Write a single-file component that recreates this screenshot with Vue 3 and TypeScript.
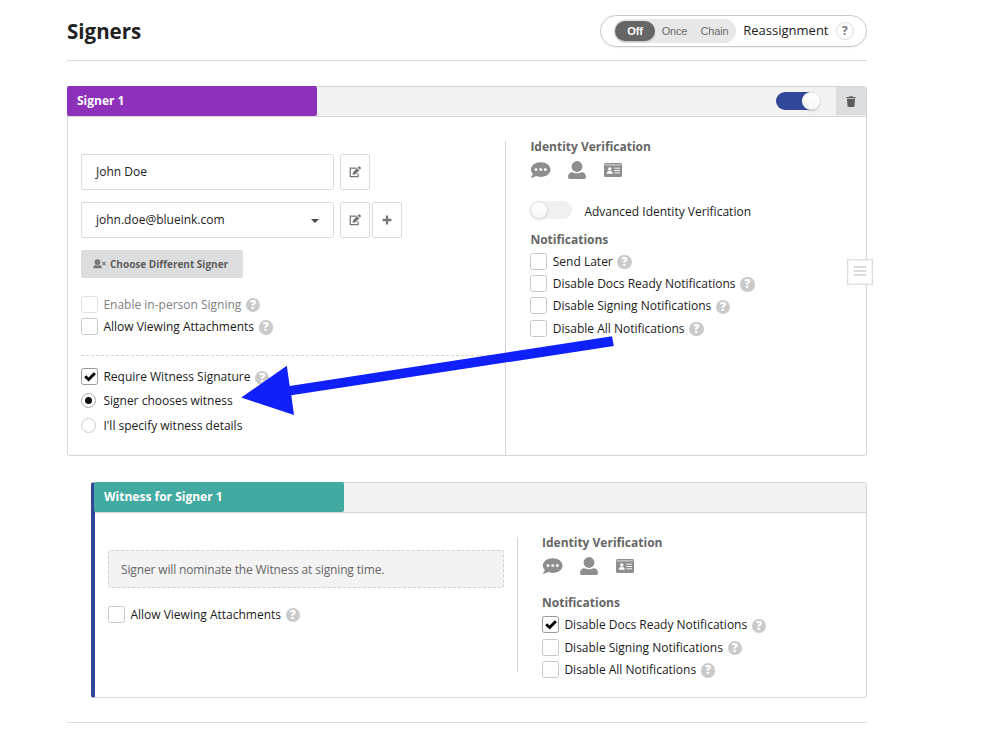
<script setup lang="ts">
import { h, type FunctionalComponent } from 'vue'

interface Option {
  label: string
  checked?: boolean
  disabled?: boolean
}

const signerOptions: Option[] = [
  { label: 'Enable in-person Signing', disabled: true },
  { label: 'Allow Viewing Attachments' },
]
const witnessRequired: Option[] = [{ label: 'Require Witness Signature', checked: true }]
const witnessModes: Option[] = [
  { label: 'Signer chooses witness', checked: true },
  { label: "I'll specify witness details" },
]
const signerNotifications: Option[] = [
  { label: 'Send Later' },
  { label: 'Disable Docs Ready Notifications' },
  { label: 'Disable Signing Notifications' },
  { label: 'Disable All Notifications' },
]
const witnessOptions: Option[] = [{ label: 'Allow Viewing Attachments' }]
const witnessNotifications: Option[] = [
  { label: 'Disable Docs Ready Notifications', checked: true },
  { label: 'Disable Signing Notifications' },
  { label: 'Disable All Notifications' },
]

const OptionList: FunctionalComponent<{ items: Option[] }> = (props) =>
  h('div', { class: 'options' }, props.items.map((o) =>
    h('div', { class: ['option', { disabled: o.disabled }] }, [
      h('span', { class: ['box', { on: o.checked }] }, o.checked
        ? [h('svg', { viewBox: '0 0 12 10', width: 12, height: 10 }, [
            h('path', { d: 'M0.2 5.2 L2.2 3.3 L4.5 5.4 L9.8 0.3 L11.9 2.2 L4.6 9.5 Z', fill: '#000' }),
          ])]
        : []),
      h('span', { class: 'label' }, o.label),
      h('span', { class: 'help' }, '?'),
    ])))
OptionList.props = ['items']

const EditIcon: FunctionalComponent = () =>
  h('svg', { viewBox: '0 0 12 12', width: 12, height: 12 }, [
    h('path', { d: 'M7.3 2.2 H1.3 V10.6 H9 V7.4', fill: 'none', stroke: '#767676', 'stroke-width': 1.3 }),
    h('path', { d: 'M3.6 8.8 L4 6.2 L8 2.1 L10.3 4.4 L6.2 8.4 Z M8.6 1.5 L9.7 0.5 Q10.3 0.1 10.8 0.6 L11.7 1.5 Q12.2 2.1 11.8 2.6 L10.8 3.8 Z', fill: '#767676' }),
  ])

const VerificationIcons: FunctionalComponent = () =>
  h('div', { class: 'verify-icons' }, [
    h('svg', { viewBox: '0 0 21 18', width: 21, height: 18 }, [
      h('path', { d: 'M10.7 1.2 C5.1 1.2 0.9 4.4 0.9 8.5 C0.9 10.3 1.7 11.8 2.9 13.1 C2.5 14.7 1.2 15.9 0.7 16.6 C2.8 16.8 4.8 16 6.1 15.1 C7.5 15.6 9 15.9 10.7 15.9 C16.2 15.9 20.5 12.6 20.5 8.5 C20.5 4.4 16.2 1.2 10.7 1.2 Z', fill: '#8e8e8e' }),
      ...[6, 10.7, 15.3].map((cx) => h('circle', { cx, cy: 8.6, r: 1.45, fill: '#fff' })),
    ]),
    h('svg', { viewBox: '0 0 18 18', width: 18, height: 18 }, [
      h('circle', { cx: 9, cy: 5.5, r: 5.4, fill: '#8e8e8e' }),
      h('path', { d: 'M0 16 C0 13 1.8 11.2 4.6 11.2 C7 12.7 11 12.7 13.4 11.2 C16.2 11.2 18 13 18 16 Q18 18 16.3 18 H1.7 Q0 18 0 16 Z', fill: '#8e8e8e' }),
    ]),
    h('svg', { viewBox: '0 0 18 14', width: 18, height: 14 }, [
      h('rect', { width: 18, height: 14, rx: 1.5, fill: '#8e8e8e' }),
      h('path', { d: 'M1 1.9 H17', stroke: '#fff', 'stroke-width': 0.7 }),
      h('path', { d: 'M10.3 5.2 H16 M10.3 7.5 H16 M10.3 9.8 H16', stroke: '#fff', 'stroke-width': 0.9 }),
      h('circle', { cx: 5.8, cy: 6, r: 1.7, fill: '#fff' }),
      h('path', { d: 'M2.8 10.7 Q2.8 8.1 4.6 7.9 Q5.8 8.6 7 7.9 Q8.8 8.1 8.8 10.7 Z', fill: '#fff' }),
    ]),
  ])
</script>

<template>
  <main class="page">
    <header class="top">
      <h1>Signers</h1>
      <div class="reassign">
        <div class="segments">
          <span class="seg off">Off</span>
          <span class="seg once">Once</span>
          <span class="seg chain">Chain</span>
        </div>
        <span class="reassign-label">Reassignment</span>
        <span class="round-help">?</span>
      </div>
    </header>

    <section class="card signer">
      <div class="bar">
        <div class="tab">Signer 1</div>
        <div class="toggle on"><i></i></div>
        <button class="trash">
          <svg viewBox="0 0 10 11" width="10" height="11">
            <path d="M0.4 0.9 H3 L3.5 0.2 H6.5 L7 0.9 H9.6 V2.2 H0.4 Z M1 3 H9 L8.5 10 Q8.4 10.9 7.5 10.9 H2.5 Q1.6 10.9 1.5 10 Z" fill="#5c5c5c" />
          </svg>
        </button>
      </div>
      <div class="body">
        <div class="left">
          <div class="fields">
            <div class="input">John Doe</div>
            <button class="square"><EditIcon /></button>
          </div>
          <div class="fields">
            <div class="input"><span class="email">john.doe@blueink.com</span><i class="caret"></i></div>
            <button class="square"><EditIcon /></button>
            <button class="square add">
              <svg viewBox="0 0 10 10" width="10" height="10"><path d="M5 0.6 V9.4 M0.6 5 H9.4" stroke="#767676" stroke-width="2.3" /></svg>
            </button>
          </div>
          <button class="choose">
            <svg viewBox="0 0 13 10" width="13" height="10">
              <circle cx="4.5" cy="3.1" r="2.9" fill="#777" />
              <path d="M0.2 8.7 Q0.2 6.2 2.6 6 Q4.5 7 6.4 6 Q8.8 6.2 8.8 8.7 Q8.8 9.3 8.1 9.3 H0.9 Q0.2 9.3 0.2 8.7 Z" fill="#777" />
              <path d="M9.3 3 L12.5 6.2 M12.5 3 L9.3 6.2" stroke="#777" stroke-width="1.1" />
            </svg>
            <span>Choose Different Signer</span>
          </button>
          <OptionList :items="signerOptions" />
          <div class="rule"></div>
          <OptionList :items="witnessRequired" />
          <div v-for="m in witnessModes" :key="m.label" class="mode">
            <span class="radio" :class="{ on: m.checked }"></span>
            <span class="label">{{ m.label }}</span>
          </div>
        </div>
        <div class="right">
          <h2>Identity Verification</h2>
          <VerificationIcons />
          <div class="advanced">
            <div class="toggle"><i></i></div>
            <span class="label">Advanced Identity Verification</span>
          </div>
          <h2>Notifications</h2>
          <OptionList :items="signerNotifications" />
        </div>
      </div>
    </section>

    <section class="card witness">
      <div class="bar">
        <div class="tab">Witness for Signer 1</div>
      </div>
      <div class="body">
        <div class="left">
          <div class="notice">Signer will nominate the Witness at signing time.</div>
          <OptionList :items="witnessOptions" />
        </div>
        <div class="right">
          <h2>Identity Verification</h2>
          <VerificationIcons />
          <h2>Notifications</h2>
          <OptionList :items="witnessNotifications" />
        </div>
      </div>
    </section>

    <div class="drag-handle"><i></i><i></i><i></i></div>
    <svg class="arrow" viewBox="0 0 1000 736" width="1000" height="736">
      <polygon points="241.3,397.6 286.8,365.8 289.7,386 612,336.3 613.8,346 291.3,395.2 294,415" fill="#1020fb" />
    </svg>
  </main>
</template>

<style>
body {
  background: #fff;
  overflow: hidden;
}
.page {
  position: relative;
  box-sizing: border-box;
  width: 1000px;
  height: 736px;
  padding: 0 133px 0 67px;
  overflow: hidden;
  font: 12px/18px "Open Sans", "Noto Sans", sans-serif;
  color: #1b1b1b;
}
.page *, .page *::before, .page *::after { box-sizing: border-box; }
.page button { font: inherit; padding: 0; margin: 0; border: 0; }
.page svg { display: block; flex: none; }
.options { display: flex; flex-direction: column; }
.option { display: flex; align-items: center; height: 22.3px; white-space: nowrap; }
.option .label { padding-top: 1px; }
.box {
  flex: none;
  width: 17px;
  height: 17px;
  border: 1px solid #c8c8c8;
  border-radius: 2.5px;
  background: #fff;
  display: flex;
  align-items: center;
  justify-content: center;
  margin-right: 5.4px;
}
.box.on { border-color: #999; }
.option.disabled .box { border-color: #e2e2e2; }
.option.disabled .label { color: #818181; }
.help {
  flex: none;
  width: 14.4px;
  height: 14.4px;
  margin: 2px 0 0 4.6px;
  border-radius: 50%;
  background: #cacaca;
  color: #fff;
  font: 800 12px/14.4px "Open Sans", sans-serif;
  text-align: center;
}
.verify-icons { display: flex; align-items: center; }
.verify-icons svg:nth-child(2) { margin-left: 17px; }
.verify-icons svg:nth-child(3) { margin-left: 18px; }
</style>

<style scoped>
.top {
  height: 61px;
  border-bottom: 1px solid #dadada;
  display: flex;
  justify-content: space-between;
}
h1 { margin: 17px 0 0; font-size: 20.5px; line-height: 28px; font-weight: 700; color: #222; }
.reassign {
  display: flex;
  align-items: center;
  width: 267px;
  height: 32px;
  margin-top: 15px;
  padding-left: 13px;
  border: 1px solid #c9c9c9;
  border-radius: 16px;
  box-shadow: 0 1px 2px #0001;
}
.segments {
  display: flex;
  align-items: center;
  width: 122px;
  height: 24px;
  padding: 0 1px;
  border-radius: 12px;
  background: #e8e8e8;
  font: 11px/20px "Liberation Sans", sans-serif;
  color: #6b6b6b;
}
.seg { text-align: center; width: 40px; letter-spacing: -0.15px; }
.seg.once, .seg.chain { padding-right: 1px; }
.seg.off { height: 20px; border-radius: 10px; background: #666; color: #fff; font-weight: bold; box-shadow: 0 1px 2px #0003; }
.reassign-label { margin: -2px 0 0 7.3px; font-size: 13px; white-space: nowrap; width: 84.7px; }
.round-help {
  width: 18px;
  height: 18px;
  margin-left: 8px;
  border: 1px solid #ddd;
  border-radius: 50%;
  font: bold 12px/16px "Open Sans", sans-serif;
  color: #777;
  text-align: center;
}
.card { border: 1px solid #d6d6d6; border-radius: 3px; }
.signer { height: 370px; margin-top: 25px; }
.bar { display: flex; height: 30px; background: #f2f2f2; border-bottom: 1px solid #d6d6d6; }
.tab {
  width: 250px;
  height: 30px;
  margin: -1px 0 0 -1px;
  padding-left: 10px;
  border-radius: 2px;
  background: #8d31bb;
  color: #fff;
  font-weight: 700;
  line-height: 29px;
}
.toggle { width: 42px; height: 18px; border-radius: 9px; background: #f0f0f0; }
.toggle i {
  display: block;
  width: 18px;
  height: 18px;
  border-radius: 50%;
  background: linear-gradient(#fff, #f7f7f7);
  box-shadow: inset 0 0 0 1px #dcdcdc, 0 1px 2px #0002;
}
.bar .toggle { width: 43px; margin: 5px 17px 0 auto; background: #33479a; }
.bar .toggle i { margin-left: 26px; box-shadow: 0 0 1px #aaa, 0 1px 2px #0003; }
.trash { width: 30px; height: 28px; background: #dcddde; display: flex; align-items: center; justify-content: center; }
.body { display: flex; }
.left { width: 437px; padding: 37px 0 0 13px; }
.fields { display: flex; height: 36px; margin-bottom: 12px; }
.input {
  width: 253px;
  border: 1px solid #dcdcdc;
  border-radius: 2px;
  padding: 0 14px;
  line-height: 34px;
  display: flex;
  align-items: center;
}
.caret { margin-left: auto; border: 4px solid transparent; border-top-color: #444; border-bottom: 0; margin-top: 2px; }
.page .square {
  width: 30px;
  margin-left: 6px;
  border: 1px solid #dcdcdc;
  border-radius: 2px;
  background: #fff;
  display: flex;
  align-items: center;
  justify-content: center;
}
.page .square.add { margin-left: 2px; }
.choose {
  display: flex;
  align-items: center;
  width: 162px;
  height: 28px;
  background: #dcddde;
  border-radius: 2px;
}
.page .choose { padding-left: 12px; font-size: 10px; font-weight: 700; color: #5e5e5e; white-space: nowrap; }
.choose span { margin-left: 4px; }
.left > .choose + .options { margin-top: 15px; }
.rule { width: 413px; margin: 17px 0 10px; border-top: 1px dashed #d4d4d4; }
.mode { display: flex; align-items: center; height: 24.9px; white-space: nowrap; }
.mode .label { padding-top: 1px; }
.radio { width: 15px; height: 15px; margin-right: 7.4px; border: 1px solid #cdcdcd; border-radius: 50%; display: flex; align-items: center; justify-content: center; }
.radio.on { border-color: #aaa; }
.radio.on::after { content: ""; width: 7px; height: 7px; border-radius: 50%; background: #111; }
.right { flex: 1; margin-top: 24px; padding-left: 24.4px; border-left: 1px solid #d6d6d6; }
.signer .right { height: 314px; }
.witness .right { height: 135px; padding-left: 24px; }
h2 { margin: 0; font-size: 12px; line-height: 16px; font-weight: 700; color: #666; }
.right > h2:first-child { margin: -2px 0 6px; }
.advanced { display: flex; align-items: center; margin: 22px 0 13px; height: 18px; }
.advanced .label { margin: 3px 0 0 12px; }
.right .options { margin-top: 2px; }
.witness { width: 776px; height: 216px; margin: 26px 0 0 24px; border-left: 4px solid #33479a; }
.witness .tab { background: #43aaa2; }
.witness .left { width: 422px; }
.witness .right > h2:nth-of-type(2) { margin-top: 20px; }
.witness .right .options { margin-top: 2.7px; }
.notice { width: 396px; height: 38px; margin-bottom: 15px; padding-left: 12px; border: 1px dashed #d2d2d2; border-radius: 3px; background: #f3f3f3; color: #666; line-height: 38px; letter-spacing: -0.14px; }
.drag-handle {
  position: absolute;
  left: 847px;
  top: 259px;
  width: 26px;
  height: 26px;
  padding: 6px 6px 0;
  border: 1px solid #dedede;
  background: #fff;
  box-shadow: inset 0 0 0 1px #f4f4f4;
  display: flex;
  flex-direction: column;
  gap: 2px;
}
.drag-handle i { height: 2px; background: #dcdcdc; }
.arrow { position: absolute; left: 0; top: 0; }
.page::after { content: ""; display: block; height: 1px; margin-top: 24px; background: #dadada; }
</style>
